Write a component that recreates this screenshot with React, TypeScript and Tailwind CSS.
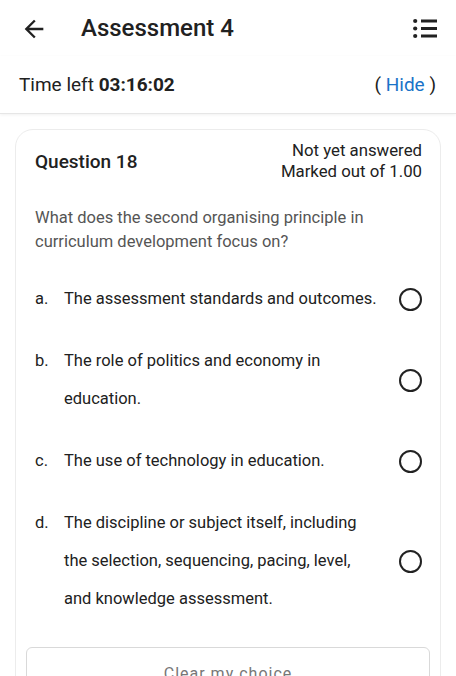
import React from "react";

const options = [
  { l: "a.", lines: ["The assessment standards and outcomes."] },
  { l: "b.", lines: ["The role of politics and economy in", "education."] },
  { l: "c.", lines: ["The use of technology in education."] },
  {
    l: "d.",
    lines: [
      "The discipline or subject itself, including",
      "the selection, sequencing, pacing, level,",
      "and knowledge assessment.",
    ],
  },
];

export default function App() {
  return (
    <div
      className="w-[456px] h-[676px] overflow-hidden bg-white text-[#212121]"
      style={{ fontFamily: "Roboto, 'Noto Sans', sans-serif" }}
    >
      <header className="h-[56px] flex items-center px-[20px]">
        <svg width="28" height="28" viewBox="0 0 24 24" className="mt-[1px]">
          <path d="M20 11H7.83l5.59-5.59L12 4l-8 8 8 8 1.41-1.41L7.83 13H20v-2z" fill="#212121" />
        </svg>
        <h1 className="ml-[33px] text-[24px] leading-[30px] font-medium">Assessment 4</h1>
        <svg width="24" height="22" viewBox="0 0 24 22" className="ml-auto mr-[-1px] mt-[2px]">
          <circle cx="2.2" cy="3" r="2.1" fill="#212121" />
          <circle cx="2.2" cy="10.5" r="2.1" fill="#212121" />
          <circle cx="2.2" cy="18" r="2.1" fill="#212121" />
          <rect x="8" y="1.5" width="16" height="3" fill="#212121" />
          <rect x="8" y="9" width="16" height="3" fill="#212121" />
          <rect x="8" y="16.5" width="16" height="3" fill="#212121" />
        </svg>
      </header>
      <div className="h-[58px] flex items-center px-[19px] text-[19px] border-b border-[#e6e6e6] shadow-[0_1px_3px_rgba(0,0,0,0.06)]">
        <span className="mt-[2px]">
          Time left <b className="font-bold">03:16:02</b>
        </span>
        <span className="ml-auto mr-[1px] mt-[2px]">
          ( <span className="text-[#1a73c8]">Hide</span> )
        </span>
      </div>
      <div className="mt-[15px] mx-[15px] border border-[#ececec] rounded-[18px] px-[19px] pt-[10px]">
        <div className="flex justify-between">
          <div className="text-[19px] font-medium mt-[8px]">Question 18</div>
          <div className="text-right text-[16.8px] leading-[21px] mr-[-1px]">
            <div>Not yet answered</div>
            <div>Marked out of 1.00</div>
          </div>
        </div>
        <p className="mt-[24px] text-[16.5px] leading-[24px] text-[#555]">
          What does the second organising principle in curriculum development focus on?
        </p>
        <div className="mt-[26px] flex flex-col gap-[24px]">
          {options.map((o) => (
            <div key={o.l} className="flex items-center text-[16.5px] leading-[38px]">
              <span className="w-[29px] self-start">{o.l}</span>
              <div className="flex-1">
                {o.lines.map((t) => (
                  <div key={t}>{t}</div>
                ))}
              </div>
              <span className="w-[23px] h-[23px] rounded-full border-2 border-[#222] mr-[-1px]" />
            </div>
          ))}
        </div>
        <button className="mt-[29px] w-full mx-[-9px] box-content px-[8px] h-[40px] border border-[#d9d9d9] rounded-[6px] text-[16px] tracking-[1px] text-[#777] flex items-start justify-center pt-[14px]">
          Clear my choice
        </button>
      </div>
    </div>
  );
}
